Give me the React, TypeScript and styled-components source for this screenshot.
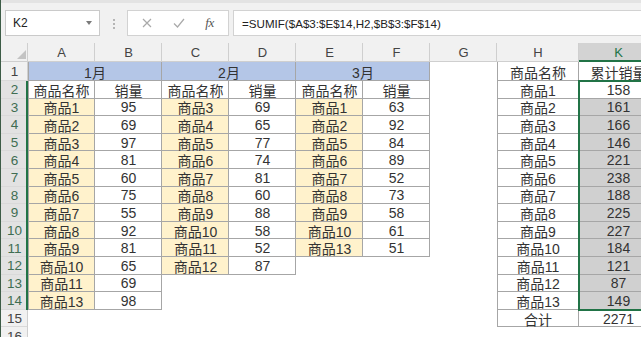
import React from 'react';
import styled, { createGlobalStyle } from 'styled-components';

const GREEN = '#217346';
const GRID = '#a6a6a6';
const HEAD_LINE = '#cfcfcf';

const Global = createGlobalStyle`
  html, body { margin: 0; padding: 0; overflow: hidden; background: #fff; }
  body { font-family: "Liberation Sans", "Noto Sans CJK SC", sans-serif; }
`;

const Window = styled.div`
  width: 641px;
  height: 337px;
  overflow: hidden;
  border-left: 1px solid #3d5c47;
  box-sizing: border-box;
  display: flex;
  flex-direction: column;
  background: #fff;
`;

const Toolbar = styled.div`
  flex: 0 0 auto;
  height: 43px;
  box-sizing: border-box;
  border-top: 3px solid #e3e3e3;
  padding-top: 7px;
  background: #f1f1f1;
  display: flex;
  align-items: flex-start;
`;

const NameBox = styled.div`
  margin-left: 4px;
  width: 95px;
  height: 26px;
  box-sizing: border-box;
  background: #fff;
  border: 1px solid #cacaca;
  display: flex;
  align-items: center;
  justify-content: space-between;
  padding: 0 7px 0 7px;
  font-size: 12px;
  color: #222;
`;

const Arrow = styled.span`
  width: 0;
  height: 0;
  border-left: 3px solid transparent;
  border-right: 3px solid transparent;
  border-top: 4px solid #7a7a7a;
`;

const Dots = styled.div`
  margin-left: 13px;
  margin-top: 9px;
  display: flex;
  flex-direction: column;
  gap: 2px;
`;

const Dot = styled.span`
  width: 2px;
  height: 2px;
  background: #b5b5b5;
`;

const FuncBox = styled.div`
  margin-left: 12px;
  width: 102px;
  height: 26px;
  box-sizing: border-box;
  background: #fff;
  border: 1px solid #d2d2d2;
  display: flex;
  align-items: center;
  justify-content: space-around;
  padding: 0 4px;
`;

const Fx = styled.span`
  font-family: "Liberation Serif", serif;
  font-style: italic;
  font-size: 13px;
  color: #555;
  letter-spacing: -0.5px;
`;

const FormulaBox = styled.div`
  margin-left: 4px;
  flex: 1;
  height: 26px;
  box-sizing: border-box;
  background: #fff;
  border: 1px solid #d2d2d2;
  border-right: none;
  display: flex;
  align-items: center;
  padding-left: 8px;
  font-size: 11.6px;
  color: #222;
  white-space: nowrap;
`;

const Sheet = styled.div`
  position: relative;
  display: grid;
  grid-template-columns: 27px repeat(7, 67px) 82px 79px;
  grid-template-rows: 19px 19px repeat(15, 17.6px);
  width: max-content;
`;

const Corner = styled.div`
  background: #f1f1f1;
  box-shadow: inset -1px 0 0 ${HEAD_LINE}, inset 0 -1px 0 ${HEAD_LINE};
  position: relative;
`;

const CornerMark = styled.span`
  position: absolute;
  right: 2px;
  bottom: 3px;
  width: 0;
  height: 0;
  border-left: 9px solid transparent;
  border-bottom: 9px solid #c3c3c3;
`;

const ColHead = styled.div<{ $active: boolean }>`
  display: flex;
  align-items: center;
  justify-content: center;
  font-size: 13px;
  color: ${(p) => (p.$active ? GREEN : '#444')};
  background: ${(p) => (p.$active ? '#d3d3d3' : '#f1f1f1')};
  box-shadow: inset -1px 0 0 ${HEAD_LINE},
    ${(p) => (p.$active ? `inset 0 -2px 0 ${GREEN}` : `inset 0 -1px 0 ${HEAD_LINE}`)};
`;

const RowHead = styled.div<{ $active: boolean }>`
  display: flex;
  align-items: center;
  justify-content: center;
  font-size: 13.5px;
  color: ${(p) => (p.$active ? '#3f6d52' : '#444')};
  background: ${(p) => (p.$active ? '#e2e2e2' : '#f1f1f1')};
  box-shadow: ${(p) => (p.$active ? `inset -2px 0 0 ${GREEN}` : `inset -1px 0 0 ${HEAD_LINE}`)},
    inset 0 -1px 0 #d9d9d9;
`;

type Kind = 'month' | 'name' | 'plain' | 'sel' | 'active';

const BG: Record<Kind, string> = {
  month: '#b4c6e7',
  name: '#fff2cc',
  plain: '#ffffff',
  sel: '#d0d0d0',
  active: '#ffffff',
};

const Cell = styled.div<{ $kind?: Kind; $span: number; $top: boolean; $left: boolean }>`
  grid-column: span ${(p) => p.$span};
  display: flex;
  align-items: center;
  justify-content: center;
  font-size: 14px;
  color: #333;
  white-space: nowrap;
  overflow: hidden;
  background: ${(p) => (p.$kind ? BG[p.$kind] : '#fff')};
  box-shadow: ${(p) =>
    p.$kind
      ? [
          `inset -1px 0 0 ${GRID}`,
          `inset 0 -1px 0 ${GRID}`,
          p.$top ? `inset 0 1px 0 ${GRID}` : null,
          p.$left ? `inset 1px 0 0 ${GRID}` : null,
        ]
          .filter(Boolean)
          .join(', ')
      : 'none'};
`;

const Selection = styled.div`
  position: absolute;
  grid-column: 10;
  grid-row: 3 / 16;
  top: -1px;
  bottom: -1px;
  left: -1px;
  right: 0;
  border: 2px solid ${GREEN};
  pointer-events: none;
  z-index: 2;
`;

type C = { t: string; k: Kind; span?: number } | null;
const N = (t: string): C => ({ t, k: 'name' });
const P = (t: string): C => ({ t, k: 'plain' });
const S = (t: string): C => ({ t, k: 'sel' });
const M = (t: string): C => ({ t, k: 'month', span: 2 });
const _ = null;

const rows: C[][] = [
  [M('1月'), M('2月'), M('3月'), _, P('商品名称'), P('累计销量')],
  [P('商品名称'), P('销量'), P('商品名称'), P('销量'), P('商品名称'), P('销量'), _, P('商品1'), { t: '158', k: 'active' }],
  [N('商品1'), P('95'), N('商品3'), P('69'), N('商品1'), P('63'), _, P('商品2'), S('161')],
  [N('商品2'), P('69'), N('商品4'), P('65'), N('商品2'), P('92'), _, P('商品3'), S('166')],
  [N('商品3'), P('97'), N('商品5'), P('77'), N('商品5'), P('84'), _, P('商品4'), S('146')],
  [N('商品4'), P('81'), N('商品6'), P('74'), N('商品6'), P('89'), _, P('商品5'), S('221')],
  [N('商品5'), P('60'), N('商品7'), P('81'), N('商品7'), P('52'), _, P('商品6'), S('238')],
  [N('商品6'), P('75'), N('商品8'), P('60'), N('商品8'), P('73'), _, P('商品7'), S('188')],
  [N('商品7'), P('55'), N('商品9'), P('88'), N('商品9'), P('58'), _, P('商品8'), S('225')],
  [N('商品8'), P('92'), N('商品10'), P('58'), N('商品10'), P('61'), _, P('商品9'), S('227')],
  [N('商品9'), P('81'), N('商品11'), P('52'), N('商品13'), P('51'), _, P('商品10'), S('184')],
  [N('商品10'), P('65'), N('商品12'), P('87'), _, _, _, P('商品11'), S('121')],
  [N('商品11'), P('69'), _, _, _, _, _, P('商品12'), S('87')],
  [N('商品13'), P('98'), _, _, _, _, _, P('商品13'), S('149')],
  [_, _, _, _, _, _, _, P('合计'), P('2271')],
  [_, _, _, _, _, _, _, _, _],
];

const COLS = ['A', 'B', 'C', 'D', 'E', 'F', 'G', 'H', 'K'];

const bordered: boolean[][] = rows.map((row) => {
  const out: boolean[] = [];
  row.forEach((c) => {
    const span = c?.span ?? 1;
    for (let i = 0; i < span; i++) out.push(!!c);
  });
  return out;
});

const XIcon = () => (
  <svg width="10" height="10" viewBox="0 0 10 10">
    <path d="M1 1 L9 9 M9 1 L1 9" stroke="#a9a9a9" strokeWidth="1.2" fill="none" />
  </svg>
);

const CheckIcon = () => (
  <svg width="12" height="10" viewBox="0 0 12 10">
    <path d="M1 5.5 L4.5 9 L11 1" stroke="#a9a9a9" strokeWidth="1.2" fill="none" />
  </svg>
);

export default function App() {
  return (
    <>
      <Global />
      <Window>
        <Toolbar>
          <NameBox>
            <span>K2</span>
            <Arrow />
          </NameBox>
          <Dots>
            <Dot />
            <Dot />
            <Dot />
          </Dots>
          <FuncBox>
            <XIcon />
            <CheckIcon />
            <Fx>fx</Fx>
          </FuncBox>
          <FormulaBox>=SUMIF($A$3:$E$14,H2,$B$3:$F$14)</FormulaBox>
        </Toolbar>
        <Sheet>
          <Corner>
            <CornerMark />
          </Corner>
          {COLS.map((c) => (
            <ColHead key={c} $active={c === 'K'}>
              {c}
            </ColHead>
          ))}
          {rows.map((row, r) => {
            let col = 0;
            return (
              <React.Fragment key={r}>
                <RowHead $active={r >= 1 && r <= 13}>{r + 1}</RowHead>
                {row.map((c, i) => {
                  const span = c?.span ?? 1;
                  const start = col;
                  col += span;
                  const top = r > 0 && !bordered[r - 1][start];
                  const left = start === 0 || !bordered[r][start - 1];
                  return (
                    <Cell key={i} $kind={c?.k} $span={span} $top={top} $left={left}>
                      {c?.t}
                    </Cell>
                  );
                })}
              </React.Fragment>
            );
          })}
          <Selection />
        </Sheet>
      </Window>
    </>
  );
}
